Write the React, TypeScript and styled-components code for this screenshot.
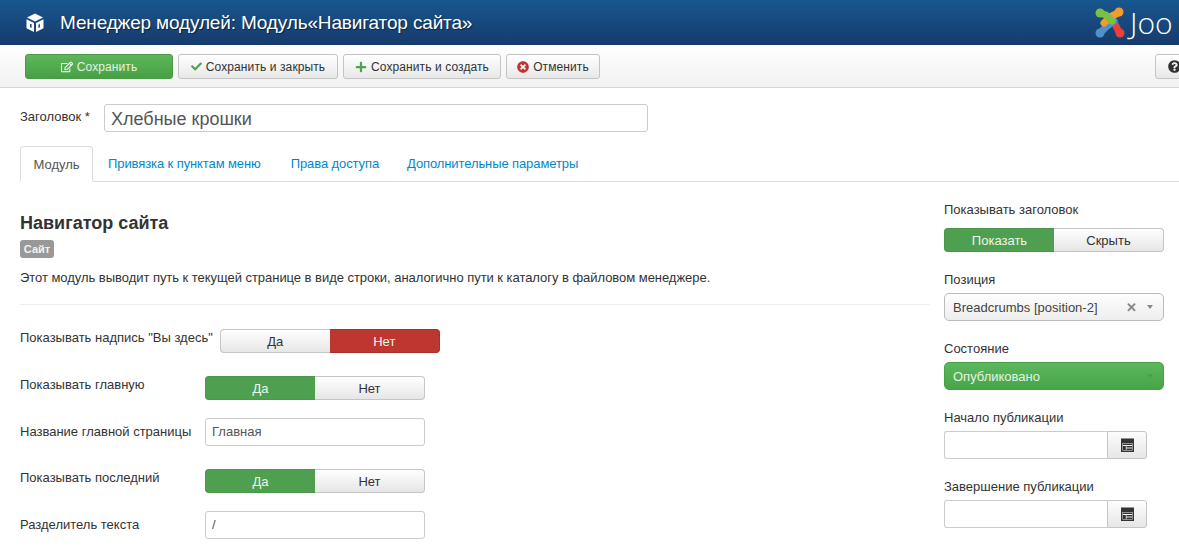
import React from "react";
import styled, { createGlobalStyle } from "styled-components";
import { FaCheck, FaPlus, FaRegEdit, FaTimesCircle, FaQuestionCircle } from "react-icons/fa";

const GlobalStyle = createGlobalStyle`
  html, body {
    margin: 0;
    padding: 0;
    background: #fff;
  }
  body {
    font-family: "Liberation Sans", Arial, sans-serif;
    font-size: 13px;
    color: #333;
  }
`;

const Page = styled.div`
  width: 1179px;
  height: 549px;
  overflow: hidden;
`;

const Header = styled.header`
  height: 45px;
  display: flex;
  align-items: center;
  padding-left: 26px;
  background: linear-gradient(#17578f, #173a6c);
`;

const Title = styled.h1`
  margin: 0 0 0 16px;
  font-size: 19px;
  font-weight: 400;
  letter-spacing: -0.15px;
  color: #fff;
  white-space: nowrap;
  text-shadow: 1px 1px 1px rgba(0, 0, 0, 0.5);
`;

const Logo = styled.div`
  margin-left: auto;
  display: flex;
  align-items: center;
  width: 84px;
  flex: none;
  overflow: hidden;
  gap: 5px;
`;

const LogoText = styled.span`
  font-family: "Open Sans", sans-serif;
  font-weight: 300;
  font-size: 30px;
  line-height: 45px;
  color: #fff;
`;

const Toolbar = styled.div`
  height: 43px;
  box-sizing: border-box;
  display: flex;
  align-items: flex-start;
  padding: 9px 0 0 25px;
  gap: 5px;
  background: linear-gradient(#fff, #f1f1f1);
  border-bottom: 1px solid #d6d6d6;
`;

const ToolButton = styled.button<{ $primary?: boolean; $width: number }>`
  height: 25px;
  width: ${({ $width }) => $width}px;
  flex: none;
  box-sizing: border-box;
  display: flex;
  align-items: center;
  justify-content: center;
  gap: 4px;
  padding: 0;
  font: 12px "Liberation Sans", Arial, sans-serif;
  letter-spacing: 0.1px;
  white-space: nowrap;
  border-radius: 3px;
  color: ${({ $primary }) => ($primary ? "#e4f1e2" : "#333")};
  border: 1px solid ${({ $primary }) => ($primary ? "#4a9a45" : "#c4c4c4")};
  background: ${({ $primary }) =>
    $primary ? "linear-gradient(#5db75a, #47a045)" : "linear-gradient(#fff, #e8e8e8)"};
`;

const HelpButton = styled(ToolButton)`
  margin-left: auto;
  margin-right: -40px;
  justify-content: flex-start;
  padding-left: 12px;
`;

const TitleRow = styled.div`
  display: flex;
  align-items: flex-start;
  padding: 16px 0 0 20px;
`;

const TitleLabel = styled.label`
  width: 84px;
  flex: none;
  line-height: 25px;
`;

const TitleInput = styled.div`
  width: 544px;
  height: 28px;
  box-sizing: border-box;
  border: 1px solid #ccc;
  border-radius: 3px;
  padding-left: 6px;
  font-size: 18px;
  line-height: 28px;
  color: #555;
`;

const Tabs = styled.nav`
  display: flex;
  margin: 14px 0 0 20px;
  height: 36px;
  box-sizing: border-box;
  border-bottom: 1px solid #ddd;
`;

const Tab = styled.a<{ $active?: boolean; $left: number }>`
  display: block;
  height: ${({ $active }) => ($active ? "36px" : "35px")};
  box-sizing: border-box;
  margin-left: ${({ $left }) => $left}px;
  padding: 0 ${({ $active }) => ($active ? "12.5px" : "0")};
  line-height: 36px;
  letter-spacing: ${({ $active }) => ($active ? "0" : "-0.1px")};
  color: ${({ $active }) => ($active ? "#555" : "#0088cc")};
  white-space: nowrap;
  ${({ $active }) =>
    $active
      ? "background: #fff; border: 1px solid #ddd; border-bottom-color: #fff; border-radius: 4px 4px 0 0;"
      : ""}
`;

const Content = styled.div`
  display: grid;
  grid-template-columns: 910px 220px;
  column-gap: 14px;
  padding: 0 0 0 20px;
`;

const Main = styled.main`
  padding-top: 31px;
`;

const ModuleName = styled.h2`
  margin: 0;
  font-size: 18px;
  line-height: 20px;
  font-weight: 700;
  color: #333;
`;

const Badge = styled.span`
  display: block;
  width: 34px;
  height: 18px;
  margin-top: 7px;
  border-radius: 3px;
  background: #999;
  color: #f2f2f2;
  font-size: 11px;
  font-weight: 700;
  line-height: 18px;
  text-align: center;
`;

const Description = styled.p`
  margin: 11px 0 0;
  line-height: 18px;
  letter-spacing: -0.04px;
  white-space: nowrap;
`;

const Divider = styled.hr`
  margin: 17px 0 0;
  border: 0;
  border-top: 1px solid #eee;
`;

const Fields = styled.div`
  padding-top: 1px;
`;

const Row = styled.div`
  display: flex;
  align-items: flex-start;
  margin-top: 18px;
`;

const RowLabel = styled.label`
  min-width: 185px;
  box-sizing: border-box;
  flex: none;
  padding: 5px 7px 0 0;
  line-height: 18px;
  white-space: nowrap;
`;

const Toggle = styled.div`
  display: flex;
  width: 220px;
  height: 24px;
  margin-top: 5px;
  flex: none;
`;

const ToggleOption = styled.span<{ $tone?: "green" | "red" }>`
  flex: 1;
  box-sizing: border-box;
  text-align: center;
  line-height: 23px;
  color: ${({ $tone }) => ($tone ? "#f0f5ee" : "#333")};
  background: ${({ $tone }) =>
    $tone === "green"
      ? "#4f9f50"
      : $tone === "red"
        ? "#bd362f"
        : "linear-gradient(#fff, #e6e6e6)"};
  border: 1px solid
    ${({ $tone }) => ($tone === "green" ? "#4a964b" : $tone === "red" ? "#a92f29" : "#c5c5c5")};
  &:first-child {
    border-radius: 4px 0 0 4px;
    border-right: 0;
  }
  &:last-child {
    border-radius: 0 4px 4px 0;
    border-left: 0;
  }
`;

const TextField = styled.div`
  width: 220px;
  height: 28px;
  box-sizing: border-box;
  border: 1px solid #ccc;
  border-radius: 3px;
  padding-left: 6px;
  line-height: 26px;
  color: #555;
`;

const Sidebar = styled.aside`
  padding-top: 19px;
`;

const SideGroup = styled.div`
  display: flex;
  flex-direction: column;
  margin-bottom: 19px;
`;

const SideLabel = styled.label`
  display: block;
  line-height: 18px;
  margin-bottom: 4px;
`;

const Select = styled.div<{ $published?: boolean }>`
  height: 28px;
  box-sizing: border-box;
  display: flex;
  align-items: center;
  padding: 0 10px 0 8px;
  border-radius: 5px;
  border: 1px solid ${({ $published }) => ($published ? "#47a045" : "#bbb")};
  background: ${({ $published }) =>
    $published ? "linear-gradient(#5cb85c, #47a447)" : "linear-gradient(#fdfdfd, #eee)"};
  color: ${({ $published }) => ($published ? "#e6f3e4" : "#444")};
`;

const SelectClear = styled.span`
  margin-left: auto;
  margin-right: 10px;
  font-size: 13px;
  font-weight: 700;
  color: #888;
`;

const Caret = styled.span<{ $dim?: boolean }>`
  margin-left: ${({ $dim }) => ($dim ? "auto" : "0")};
  width: 0;
  height: 0;
  border: 3px solid transparent;
  border-top: 4px solid ${({ $dim }) => ($dim ? "#4f9c4d" : "#888")};
  border-bottom: 0;
`;

const DateField = styled.div`
  display: flex;
  width: 203px;
  height: 28px;
`;

const DateInput = styled.div`
  flex: 1;
  border: 1px solid #ccc;
  border-right: 0;
  border-radius: 3px 0 0 3px;
`;

const DateButton = styled.div`
  width: 40px;
  box-sizing: border-box;
  display: flex;
  align-items: center;
  justify-content: center;
  border: 1px solid #c5c5c5;
  border-radius: 0 3px 3px 0;
  background: linear-gradient(#fdfdfd, #e6e6e6);
`;

const CubeIcon = () => (
  <svg width="18" height="20" viewBox="0 0 18 20" style={{ flex: "none" }}>
    <path fill="#fff" d="M9 0.5 17 4.5 9 8.5 1 4.5Z" />
    <path fill="#fff" d="M0.5 6.2 8 10v9L0.5 15.2Z" />
    <path fill="#fff" d="M17.5 6.2 10 10v9l7.5-3.8Z" />
    <path fill="#17507f" d="M4 11h1.6v4L4 14.2ZM12.4 11.8l1.6-.8v3.2l-1.6.8Z" />
  </svg>
);

const JoomlaMark = () => (
  <svg width="30" height="31" viewBox="0 0 30 31" style={{ flex: "none" }}>
    <g fill="none" strokeWidth="7" strokeLinecap="round" strokeLinejoin="round">
      <path stroke="#e8403a" d="M14 11 20 17 24 25" />
      <path stroke="#5091cd" d="M6 25 11 20 19 14" />
      <path stroke="#f49c2a" d="M9 16 15 10 23 6" />
      <path stroke="#7ac143" d="M5 6 11 8 17 14" />
    </g>
    <circle cx="5" cy="6" r="4.5" fill="#7ac143" />
    <circle cx="24" cy="5" r="4.5" fill="#f49c2a" />
    <circle cx="5" cy="26" r="4.5" fill="#5091cd" />
    <circle cx="25" cy="26" r="4.5" fill="#e8403a" />
  </svg>
);

const CalendarIcon = () => (
  <svg width="13" height="14" viewBox="0 0 13 14">
    <path
      fill="#333"
      fillRule="evenodd"
      d="M0 0.5h13V14H0ZM1.5 5V12.5H11.5V5ZM2 5.5h9v1.5H2ZM5.5 8h5.5v1.6H5.5ZM5.5 10.4h5.5V12H5.5ZM2 8h2.8v4H2Z"
    />
  </svg>
);

const SideDate = ({ label }: { label: string }) => (
  <SideGroup>
    <SideLabel>{label}</SideLabel>
    <DateField>
      <DateInput />
      <DateButton>
        <CalendarIcon />
      </DateButton>
    </DateField>
  </SideGroup>
);

export default function App() {
  return (
    <Page>
      <GlobalStyle />
      <Header>
        <CubeIcon />
        <Title>Менеджер модулей: Модуль«Навигатор сайта»</Title>
        <Logo>
          <JoomlaMark />
          <LogoText>Joo</LogoText>
        </Logo>
      </Header>
      <Toolbar>
        <ToolButton $primary $width={148}>
          <FaRegEdit size={12} color="#fff" /> Сохранить
        </ToolButton>
        <ToolButton $width={160}>
          <FaCheck size={11} color="#51a351" /> Сохранить и закрыть
        </ToolButton>
        <ToolButton $width={158}>
          <FaPlus size={12} color="#51a351" /> Сохранить и создать
        </ToolButton>
        <ToolButton $width={94}>
          <FaTimesCircle size={12} color="#bd362f" /> Отменить
        </ToolButton>
        <HelpButton $width={64}>
          <FaQuestionCircle size={13} color="#333" />
        </HelpButton>
      </Toolbar>
      <TitleRow>
        <TitleLabel>Заголовок *</TitleLabel>
        <TitleInput>Хлебные крошки</TitleInput>
      </TitleRow>
      <Tabs>
        <Tab $active $left={0}>Модуль</Tab>
        <Tab $left={15}>Привязка к пунктам меню</Tab>
        <Tab $left={30}>Права доступа</Tab>
        <Tab $left={28}>Дополнительные параметры</Tab>
      </Tabs>
      <Content>
        <Main>
          <ModuleName>Навигатор сайта</ModuleName>
          <Badge>Сайт</Badge>
          <Description>
            Этот модуль выводит путь к текущей странице в виде строки, аналогично пути к каталогу в файловом менеджере.
          </Description>
          <Divider />
          <Fields>
            <Row>
              <RowLabel>Показывать надпись "Вы здесь"</RowLabel>
              <Toggle>
                <ToggleOption>Да</ToggleOption>
                <ToggleOption $tone="red">Нет</ToggleOption>
              </Toggle>
            </Row>
            <Row>
              <RowLabel>Показывать главную</RowLabel>
              <Toggle>
                <ToggleOption $tone="green">Да</ToggleOption>
                <ToggleOption>Нет</ToggleOption>
              </Toggle>
            </Row>
            <Row>
              <RowLabel>Название главной страницы</RowLabel>
              <TextField>Главная</TextField>
            </Row>
            <Row>
              <RowLabel>Показывать последний</RowLabel>
              <Toggle>
                <ToggleOption $tone="green">Да</ToggleOption>
                <ToggleOption>Нет</ToggleOption>
              </Toggle>
            </Row>
            <Row>
              <RowLabel>Разделитель текста</RowLabel>
              <TextField>/</TextField>
            </Row>
          </Fields>
        </Main>
        <Sidebar>
          <SideGroup>
            <SideLabel>Показывать заголовок</SideLabel>
            <Toggle>
              <ToggleOption $tone="green">Показать</ToggleOption>
              <ToggleOption>Скрыть</ToggleOption>
            </Toggle>
          </SideGroup>
          <SideGroup>
            <SideLabel>Позиция</SideLabel>
            <Select>
              Breadcrumbs [position-2]
              <SelectClear>✕</SelectClear>
              <Caret />
            </Select>
          </SideGroup>
          <SideGroup>
            <SideLabel>Состояние</SideLabel>
            <Select $published>
              Опубликовано
              <Caret $dim />
            </Select>
          </SideGroup>
          <SideDate label="Начало публикации" />
          <SideDate label="Завершение публикации" />
        </Sidebar>
      </Content>
    </Page>
  );
}
